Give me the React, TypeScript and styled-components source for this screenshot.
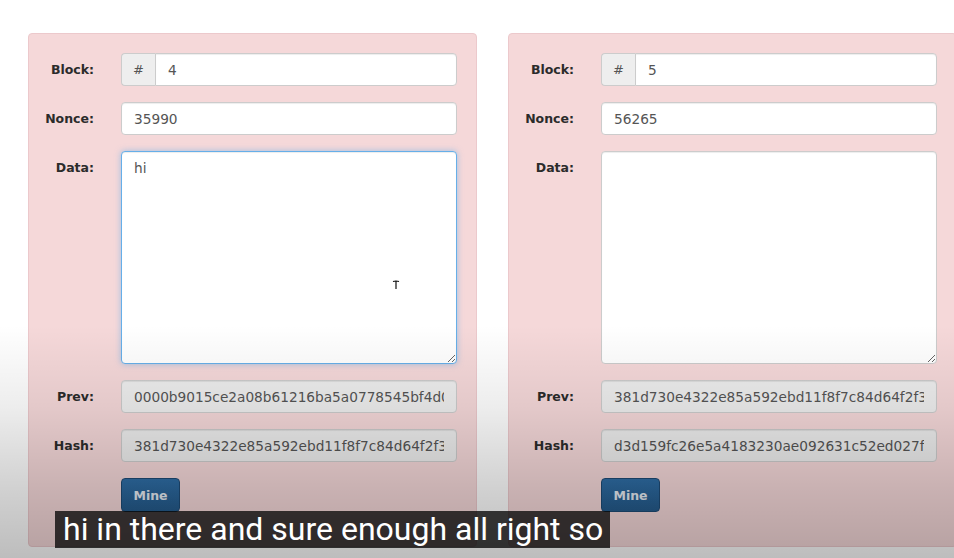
import React from 'react';
import styled, { createGlobalStyle } from 'styled-components';

interface BlockData {
  id: number;
  nonce: string;
  data: string;
  prev: string;
  hash: string;
  focused?: boolean;
}

const blocks: BlockData[] = [
  {
    id: 4,
    nonce: '35990',
    data: 'hi',
    prev: '0000b9015ce2a08b61216ba5a0778545bf4d0e1c6a3f27b8d4e0c91a5b7f2e63',
    hash: '381d730e4322e85a592ebd11f8f7c84d64f2f3a0b6e19c5d72f4a8e03b1d6c95',
    focused: true,
  },
  {
    id: 5,
    nonce: '56265',
    data: '',
    prev: '381d730e4322e85a592ebd11f8f7c84d64f2f3a0b6e19c5d72f4a8e03b1d6c95',
    hash: 'd3d159fc26e5a4183230ae092631c52ed027f8b94e1a6c03d5f72b8e19a4c607',
  },
];

const GlobalStyle = createGlobalStyle`
  html, body {
    margin: 0;
    padding: 0;
    background: #ffffff;
    overflow: hidden;
  }
  body {
    font-family: "DejaVu Sans", "Liberation Sans", sans-serif;
  }
`;

const Screen = styled.div`
  position: relative;
  width: 954px;
  height: 558px;
  overflow: hidden;
  background: #fff;
`;

const Row = styled.div`
  display: flex;
  gap: 31px;
  padding: 33px 0 0 28px;
`;

const Card = styled.div`
  flex-shrink: 0;
  width: 449px;
  box-sizing: border-box;
  padding: 19px 19px 34px 19px;
  background: #f5d8d9;
  border: 1px solid #ecc9cc;
  border-radius: 4px;
  display: grid;
  grid-template-columns: 46px 336px;
  column-gap: 27px;
  row-gap: 16px;
`;

const Label = styled.label`
  display: flex;
  justify-content: flex-end;
  font-weight: bold;
  font-size: 12.5px;
  line-height: 17px;
  padding-top: 8px;
  color: #2b2b2b;
  white-space: nowrap;
`;

const InputGroup = styled.div`
  display: flex;
  height: 33px;
`;

const Addon = styled.span`
  width: 34px;
  box-sizing: border-box;
  display: flex;
  align-items: center;
  justify-content: center;
  background: #eeeeee;
  border: 1px solid #cccccc;
  border-right: none;
  border-radius: 4px 0 0 4px;
  color: #555;
  font-size: 13px;
`;

const Field = styled.input<{ $joined?: boolean }>`
  flex: 1;
  width: 100%;
  height: 33px;
  box-sizing: border-box;
  padding: 6px 12px;
  font-family: "DejaVu Sans", sans-serif;
  font-size: 13.7px;
  color: #555;
  background: ${(p) => (p.readOnly ? '#eeeeee' : '#ffffff')};
  border: 1px solid #cccccc;
  border-radius: ${(p) => (p.$joined ? '0 4px 4px 0' : '4px')};
  box-shadow: inset 0 1px 1px rgba(0, 0, 0, 0.075);
  outline: none;
  min-width: 0;
`;

const DataArea = styled.textarea<{ $focused?: boolean }>`
  height: 213px;
  box-sizing: border-box;
  padding: 6px 12px;
  font-family: "DejaVu Sans", sans-serif;
  font-size: 13.7px;
  line-height: 20px;
  color: #555;
  background: #fff;
  border: 1px solid ${(p) => (p.$focused ? '#66afe9' : '#cccccc')};
  border-radius: 4px;
  box-shadow: ${(p) =>
    p.$focused
      ? 'inset 0 1px 1px rgba(0,0,0,.075), 0 0 6px rgba(102,175,233,.6)'
      : 'inset 0 1px 1px rgba(0,0,0,.075)'};
  outline: none;
  resize: vertical;
`;

const MineButton = styled.button`
  justify-self: start;
  width: 59px;
  height: 34px;
  padding: 0;
  font-family: "DejaVu Sans", sans-serif;
  font-weight: bold;
  font-size: 12.5px;
  color: #e6ecf3;
  background: linear-gradient(to bottom, #2f6ea6 0%, #245a8a 100%);
  border: 1px solid #1d4a74;
  border-radius: 4px;
`;

const Shade = styled.div`
  position: absolute;
  left: 0;
  right: 0;
  top: 325px;
  bottom: 0;
  pointer-events: none;
  background: linear-gradient(
    to bottom,
    rgba(0, 0, 0, 0) 0%,
    rgba(0, 0, 0, 0.07) 35%,
    rgba(0, 0, 0, 0.18) 70%,
    rgba(0, 0, 0, 0.26) 100%
  );
`;

const Caption = styled.div`
  position: absolute;
  left: 55px;
  top: 511px;
  height: 37px;
  padding: 0 7px 0 8px;
  background: rgba(8, 8, 8, 0.78);
  color: #ffffff;
  font-family: Roboto, "Liberation Sans", sans-serif;
  font-size: 32px;
  line-height: 37px;
  white-space: nowrap;
`;

const Cursor = styled.svg`
  position: absolute;
  left: 392px;
  top: 280px;
  pointer-events: none;
`;

const Block: React.FC<{ block: BlockData }> = ({ block }) => (
  <Card>
    <Label>Block:</Label>
    <InputGroup>
      <Addon>#</Addon>
      <Field $joined defaultValue={block.id} />
    </InputGroup>

    <Label>Nonce:</Label>
    <Field defaultValue={block.nonce} />

    <Label>Data:</Label>
    <DataArea $focused={block.focused} defaultValue={block.data} />

    <Label>Prev:</Label>
    <Field readOnly defaultValue={block.prev} />

    <Label>Hash:</Label>
    <Field readOnly defaultValue={block.hash} />

    <span />
    <MineButton>Mine</MineButton>
  </Card>
);

export default function App() {
  return (
    <Screen>
      <GlobalStyle />
      <Row>
        {blocks.map((b) => (
          <Block key={b.id} block={b} />
        ))}
      </Row>
      <Cursor width="8" height="10" viewBox="0 0 8 10">
        <path d="M1 1.5 Q4 0.5 7 1.5 M4 1 V9" stroke="#111" strokeWidth="1.2" fill="none" />
      </Cursor>
      <Shade />
      <Caption>hi in there and sure enough all right so</Caption>
    </Screen>
  );
}
